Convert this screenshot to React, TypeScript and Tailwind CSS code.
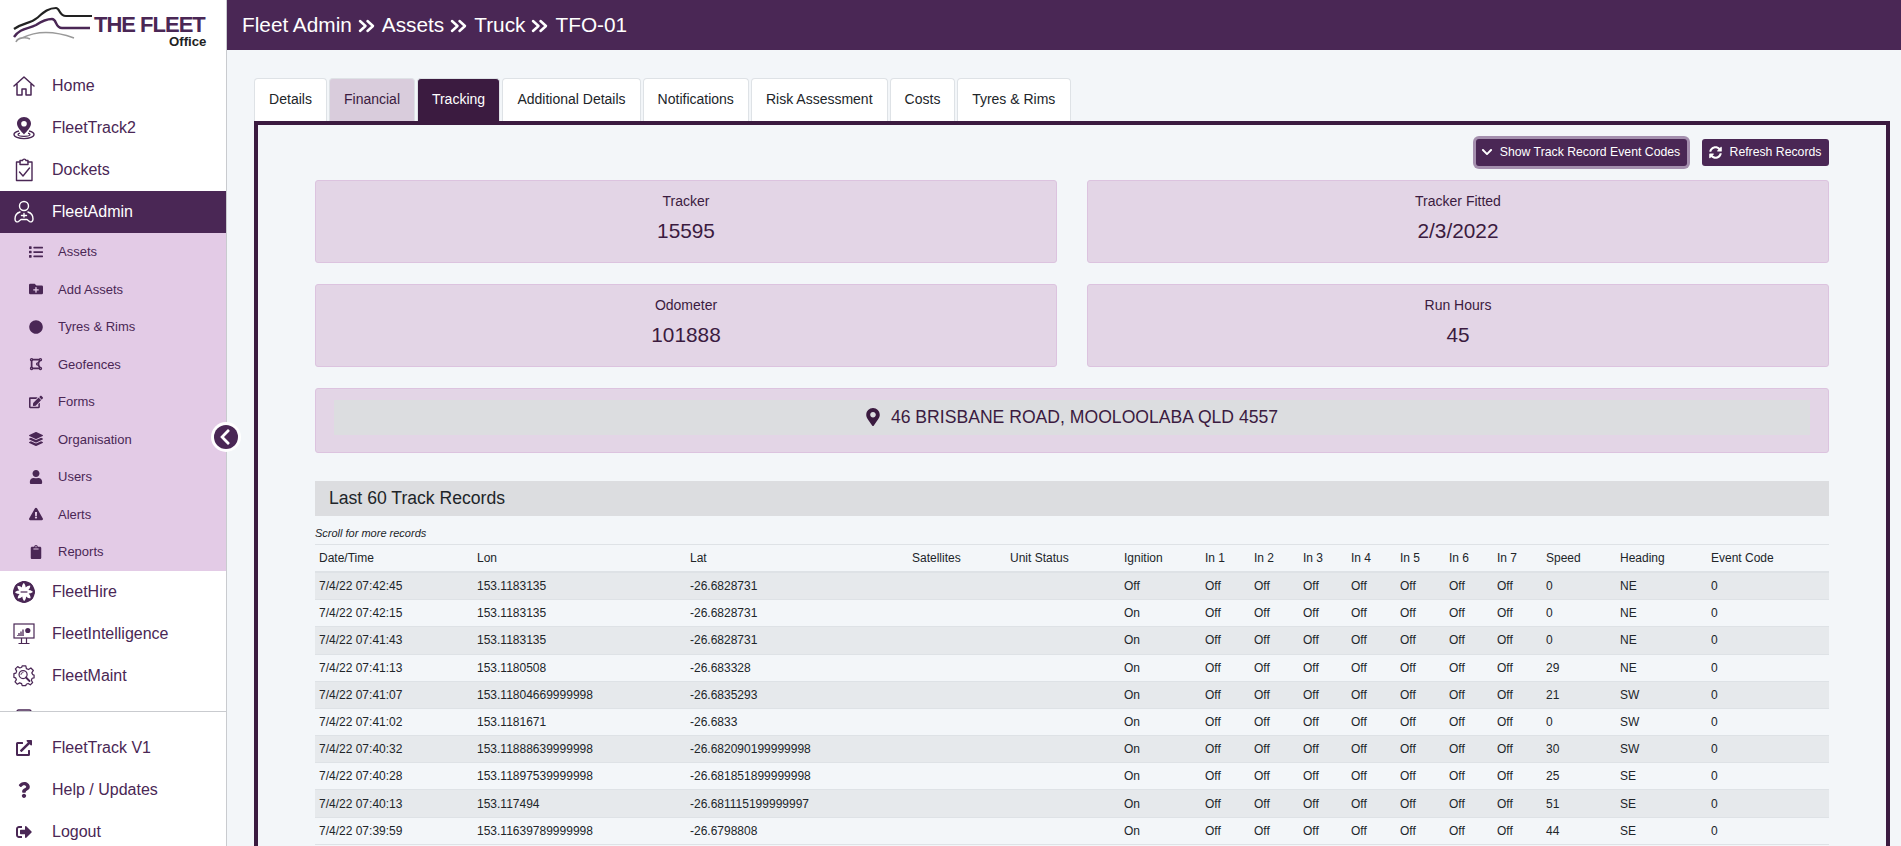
import React from 'react';
import {
  FaList, FaFolderPlus, FaCircle, FaDrawPolygon, FaEdit, FaLayerGroup, FaUser, FaExclamationTriangle,
  FaClipboard, FaExternalLinkAlt, FaQuestion, FaSignOutAlt, FaChevronLeft, FaChevronDown, FaSyncAlt,
  FaMapMarkerAlt,
} from 'react-icons/fa';

const P = '#4a2755';

function Logo() {
  return (
    <svg width="226" height="65" viewBox="0 0 226 65" className="block">
      <path d="M14 29 C24 22 30 24 37 18 C43 13 48 8 56 8 C60 8 59 16 66 16 L92 16" fill="none" stroke="#222" strokeWidth="2.2" />
      <path d="M14 37 C20 28 28 29 36 25 C42 21 46 19 52 19 C57 19 55 28 62 28 L90 28" fill="none" stroke={P} strokeWidth="2.4" />
      <path d="M16 42 C18 37 26 37 30 39 M22 38 C34 32 52 30 74 38" fill="none" stroke="#9a9a9a" strokeWidth="1.6" />
      <text x="94" y="32" fontSize="22" fontWeight="700" fill={P} letterSpacing="-1" fontFamily="'Liberation Sans',sans-serif">THE FLEET</text>
      <text x="169" y="46" fontSize="13.2" fontWeight="700" fill="#222" fontFamily="'Liberation Sans',sans-serif">Office</text>
    </svg>
  );
}

const HomeIcon = () => (
  <svg viewBox="0 0 22 22" width="22" height="22" fill="none" stroke={P} strokeWidth="1.5" strokeLinejoin="round" strokeLinecap="round">
    <path d="M1 11 L11 2 L21 11 M4 9 V20 H9 V14 H13 V20 H18 V9" />
  </svg>
);
const TrackIcon = () => (
  <svg viewBox="0 0 22 24" width="22" height="24" fill="none" stroke={P}>
    <path fillRule="evenodd" stroke="none" fill={P} d="M11 1 C6.8 1 4 4 4 7.6 C4 11.4 8.6 16 11 18.5 C13.4 16 18 11.4 18 7.6 C18 4 15.2 1 11 1 Z M11 5 A2.8 2.8 0 1 1 11 10.6 A2.8 2.8 0 1 1 11 5 Z" />
    <path strokeWidth="1.4" d="M6 15 C2.5 15.8 1 17 1 18.5 C1 20.8 5.5 22.6 11 22.6 C16.5 22.6 21 20.8 21 18.5 C21 17 19.5 15.8 16 15" />
    <path strokeWidth="1.2" d="M7 17.2 C5.5 17.6 5 18.1 5 18.6 C5 19.7 7.7 20.4 11 20.4 C14.3 20.4 17 19.7 17 18.6 C17 18.1 16.5 17.6 15 17.2" />
  </svg>
);
const DocketIcon = () => (
  <svg viewBox="0 0 22 24" width="22" height="24" fill="none" stroke={P} strokeWidth="1.4" strokeLinejoin="round" strokeLinecap="round">
    <path d="M7 4 H3.5 V22.5 H19 V4 H15" />
    <path d="M7 2.5 H9.5 A1.8 1.8 0 0 1 13 2.5 H15 V6.5 H7 Z" />
    <path d="M6.5 14 L10 18 L16.5 10" />
  </svg>
);
const AdminIcon = () => (
  <svg viewBox="0 0 22 24" width="22" height="24" fill="none" stroke="#fff" strokeWidth="1.4" strokeLinejoin="round" strokeLinecap="round">
    <circle cx="11" cy="6" r="4.5" />
    <path d="M7 12 C3.5 13 2 16 2 19 C2 21.5 4 22.5 5.5 21.5 L8 19.5 H14 L16.5 21.5 C18 22.5 20 21.5 20 19 C20 16 18.5 13 15 12" />
    <path d="M8.5 15.5 H13.5 M11 13.5 V17" />
  </svg>
);
const HireIcon = () => (
  <svg viewBox="-11 -11 22 22" width="22" height="22" fill={P}>
    {[0, 45, 90, 135, 180, 225, 270, 315].map((a) => (
      <path key={a} transform={`rotate(${a})`} d="M-2.5 -10.8 C2.5 -11.4 7.2 -9.4 9 -5.8 C6.5 -7.2 3.5 -6.6 1.6 -4.6 C1.8 -6.8 0.2 -9.4 -2.5 -10.8 Z" />
    ))}
    <circle r="4.4" fill="#fff" />
    <rect x="-3.4" y="-0.8" width="6.8" height="1.6" opacity="0.75" />
  </svg>
);
const IntelIcon = () => (
  <svg viewBox="0 0 22 22" width="22" height="22" fill="none" stroke={P} strokeWidth="1.2">
    <rect x="1" y="1" width="20" height="14" />
    <path d="M8.5 15 V20 M13.5 15 V20 M5.5 20.5 H16.5" />
    <path d="M6 12 V10 M8 12 V8.5 M10 12 V6.5" strokeWidth="1.3" />
    <circle cx="14.8" cy="7.5" r="2.6" fill={P} stroke="none" />
    <path d="M4 12.5 H11" strokeWidth="0.7" />
  </svg>
);
const MaintIcon = () => (
  <svg viewBox="0 0 24 24" width="23" height="23" fill="none" stroke={P} strokeWidth="1.35" strokeLinejoin="round" strokeLinecap="round">
    <path d="M10 1.5 H14 L14.6 4.5 L16.9 5.5 L19.5 3.8 L22.2 6.5 L20.5 9.1 L21.5 11 L23 11.5 V14.5 L20.9 15 L20 17.2 L21.4 19.7 L18.9 22.2 L16.5 20.7 L14.5 21.5 L14 23 H10 L9.4 20.9 L7.2 20 L4.8 21.5 L2.2 18.9 L3.7 16.5 L2.8 14.5 L1 14 V10 L3.2 9.4 L4 7.2 L2.6 4.8 L5.1 2.3 L7.5 3.8 L9.5 3 Z" />
    <circle cx="11" cy="11" r="4.4" />
    <path d="M14.2 14.2 L18 18" strokeWidth="2" />
    <path d="M8.6 11 A2.4 2.4 0 0 1 11 8.6" strokeWidth="0.9" />
  </svg>
);
const ClippedIcon = () => (
  <svg viewBox="0 0 16 18" width="16" height="18" fill="none" stroke={P} strokeWidth="1.4">
    <rect x="1" y="1" width="14" height="16" rx="1.5" />
  </svg>
);

function NavRow({ icon, label, active }: { icon: React.ReactNode; label?: string; active?: boolean }) {
  return (
    <div className={active ? 'flex items-center h-[42px] shrink-0 bg-[#4a2755] text-white' : 'flex items-center h-[42px] shrink-0 text-[#4a2755]'}>
      <span className="ml-[13px] w-[22px] flex justify-center">{icon}</span>
      {label && <span className="ml-[17px] text-[16px] whitespace-nowrap">{label}</span>}
    </div>
  );
}

function SubRow({ icon, label }: { icon: React.ReactNode; label: string }) {
  return (
    <div className="flex items-center h-[37.5px] text-[13px] text-[#4a2755]">
      <span className="ml-[28px] w-[16px] flex justify-center text-[14px]">{icon}</span>
      <span className="ml-[14px]">{label}</span>
    </div>
  );
}

function Sidebar() {
  return (
    <aside className="relative w-[227px] shrink-0 h-full bg-white border-r border-[#c9cbcf] flex flex-col">
      <div className="h-[65px] shrink-0"><Logo /></div>
      <div className="flex-1 min-h-0 overflow-hidden flex flex-col">
        <NavRow icon={<HomeIcon />} label="Home" />
        <NavRow icon={<TrackIcon />} label="FleetTrack2" />
        <NavRow icon={<DocketIcon />} label="Dockets" />
        <NavRow active icon={<AdminIcon />} label="FleetAdmin" />
        <div className="bg-[#e3cbe6] shrink-0">
          <SubRow icon={<FaList />} label="Assets" />
          <SubRow icon={<FaFolderPlus />} label="Add Assets" />
          <SubRow icon={<FaCircle />} label="Tyres & Rims" />
          <SubRow icon={<FaDrawPolygon />} label="Geofences" />
          <SubRow icon={<FaEdit />} label="Forms" />
          <SubRow icon={<FaLayerGroup />} label="Organisation" />
          <SubRow icon={<FaUser />} label="Users" />
          <SubRow icon={<FaExclamationTriangle />} label="Alerts" />
          <SubRow icon={<FaClipboard />} label="Reports" />
        </div>
        <NavRow icon={<HireIcon />} label="FleetHire" />
        <NavRow icon={<IntelIcon />} label="FleetIntelligence" />
        <NavRow icon={<MaintIcon />} label="FleetMaint" />
        <NavRow icon={<ClippedIcon />} />
      </div>
      <div className="shrink-0 border-t border-[#c9cbcf] pt-[15px] h-[135px]">
        <NavRow icon={<FaExternalLinkAlt className="text-[16px]" />} label="FleetTrack V1" />
        <NavRow icon={<FaQuestion className="text-[16px]" />} label="Help / Updates" />
        <NavRow icon={<FaSignOutAlt className="text-[16px]" />} label="Logout" />
      </div>
      <div className="absolute left-[211px] top-[422px] w-[30px] h-[30px] rounded-full bg-white flex items-center justify-center">
        <div className="w-[24px] h-[24px] rounded-full bg-[#4a2755] text-white flex items-center justify-center text-[18px]">
          <FaChevronLeft className="mr-[2px]" />
        </div>
      </div>
    </aside>
  );
}

const tabs = [
  { label: 'Details', cls: 'w-[73px] bg-white text-[#212529]' },
  { label: 'Financial', cls: 'w-[86px] bg-[#d9ccdc] text-[#3b1b40]' },
  { label: 'Tracking', cls: 'w-[83px] bg-[#3b1b40] text-white border-[#3b1b40]' },
  { label: 'Additional Details', cls: 'w-[139px] bg-white text-[#212529]' },
  { label: 'Notifications', cls: 'w-[105.5px] bg-white text-[#212529]' },
  { label: 'Risk Assessment', cls: 'w-[137.5px] bg-white text-[#212529]' },
  { label: 'Costs', cls: 'w-[65px] bg-white text-[#212529]' },
  { label: 'Tyres & Rims', cls: 'w-[113.5px] bg-white text-[#212529]' },
];

function Stat({ label, value }: { label: string; value: string }) {
  return (
    <div className="h-[83px] rounded-[3px] bg-[#e3d5e6] border border-[#dcc3df] flex flex-col items-center pt-[10px] text-[#3b1b40]">
      <div className="text-[14px] leading-[20px]">{label}</div>
      <div className="text-[20.8px] leading-[30px] mt-[5px]">{value}</div>
    </div>
  );
}

const colClasses = [
  'w-[158px]', 'w-[213px]', 'w-[222px]', 'w-[98px]', 'w-[114px]', 'w-[81px]',
  'w-[49px]', 'w-[49px]', 'w-[48px]', 'w-[49px]', 'w-[49px]', 'w-[48px]', 'w-[49px]',
  'w-[74px]', 'w-[91px]', 'w-[122px]',
];
const headers = ['Date/Time', 'Lon', 'Lat', 'Satellites', 'Unit Status', 'Ignition', 'In 1', 'In 2', 'In 3', 'In 4', 'In 5', 'In 6', 'In 7', 'Speed', 'Heading', 'Event Code'];
const rows: [string, string, string, string, string, string][] = [
  ['7/4/22 07:42:45', '153.1183135', '-26.6828731', 'Off', '0', 'NE'],
  ['7/4/22 07:42:15', '153.1183135', '-26.6828731', 'On', '0', 'NE'],
  ['7/4/22 07:41:43', '153.1183135', '-26.6828731', 'On', '0', 'NE'],
  ['7/4/22 07:41:13', '153.1180508', '-26.683328', 'On', '29', 'NE'],
  ['7/4/22 07:41:07', '153.11804669999998', '-26.6835293', 'On', '21', 'SW'],
  ['7/4/22 07:41:02', '153.1181671', '-26.6833', 'On', '0', 'SW'],
  ['7/4/22 07:40:32', '153.11888639999998', '-26.682090199999998', 'On', '30', 'SW'],
  ['7/4/22 07:40:28', '153.11897539999998', '-26.681851899999998', 'On', '25', 'SE'],
  ['7/4/22 07:40:13', '153.117494', '-26.681115199999997', 'On', '51', 'SE'],
  ['7/4/22 07:39:59', '153.11639789999998', '-26.6798808', 'On', '44', 'SE'],
];

function Tracks() {
  return (
    <table className="w-[1514px] table-fixed border-collapse text-[12px] text-[#212529]">
      <colgroup>
        {colClasses.map((c, i) => <col key={i} className={c} />)}
      </colgroup>
      <thead>
        <tr className="h-[28px] border-t border-[#dee2e6] border-b-2">
          {headers.map((h) => <th key={h} className="px-[4px] font-normal text-left whitespace-nowrap">{h}</th>)}
        </tr>
      </thead>
      <tbody>
        {rows.map((r, i) => (
          <tr key={r[0]} className={i % 2 === 0 ? 'h-[27.2px] bg-[#e6e9ec] border-b border-[#dee2e6]' : 'h-[27.2px] border-b border-[#dee2e6]'}>
            <td className="px-[4px] whitespace-nowrap">{r[0]}</td>
            <td className="px-[4px] whitespace-nowrap">{r[1]}</td>
            <td className="px-[4px] whitespace-nowrap">{r[2]}</td>
            <td className="px-[4px]"></td>
            <td className="px-[4px]"></td>
            <td className="px-[4px]">{r[3]}</td>
            {[1, 2, 3, 4, 5, 6, 7].map((n) => <td key={n} className="px-[4px]">Off</td>)}
            <td className="px-[4px]">{r[4]}</td>
            <td className="px-[4px]">{r[5]}</td>
            <td className="px-[4px]">0</td>
          </tr>
        ))}
      </tbody>
    </table>
  );
}

function Crumb() {
  return (
    <svg viewBox="0 0 18 14" width="18" height="14" className="mx-[6px] mt-[2px]" fill="none" stroke="#fff" strokeWidth="2.5" strokeLinecap="round" strokeLinejoin="round">
      <path d="M2 2 L7.5 7 L2 12 M9.5 2 L15 7 L9.5 12" />
    </svg>
  );
}

export default function App() {
  return (
    <div className="flex h-[846px] w-[1901px] overflow-hidden bg-[#f3f6f9] [font-family:'Liberation_Sans',Arial,sans-serif]">
      <Sidebar />
      <main className="flex-1 min-w-0 h-full flex flex-col">
        <header className="h-[50px] shrink-0 bg-[#4a2755] text-white flex items-center pl-[15px] text-[20.8px]">
          <span>Fleet Admin</span><Crumb /><span>Assets</span><Crumb /><span>Truck</span><Crumb /><span>TFO-01</span>
        </header>
        <div className="pt-[28px] pl-[27px] pr-[11px] flex-1 min-h-0 flex flex-col">
          <div className="flex gap-[2px] h-[43px] shrink-0">
            {tabs.map((t) => (
              <div key={t.label} className={`${t.cls} h-[43px] pb-[2px] flex items-center justify-center text-[14px] border border-b-0 border-[#dee2e6] rounded-t-[4px] whitespace-nowrap`}>
                {t.label}
              </div>
            ))}
          </div>
          <section className="flex-1 min-h-0 border-4 border-[#3b1b40] border-b-0 px-[57px]">
            <div className="flex justify-end items-center gap-[15px] h-[55px] pb-[1px]">
              <button className="h-[27px] w-[211px] pr-[2px] rounded-[3px] bg-[#4a2755] text-white text-[12.25px] flex items-center justify-center gap-[7px] shadow-[0_0_0_3px_#a48fae]">
                <FaChevronDown className="text-[12px]" />Show Track Record Event Codes
              </button>
              <button className="h-[27px] w-[127px] pr-[1px] rounded-[3px] bg-[#4a2755] text-white text-[12.25px] flex items-center justify-center gap-[8px]">
                <FaSyncAlt className="text-[13px]" />Refresh Records
              </button>
            </div>
            <div className="grid grid-cols-2 gap-x-[30px] gap-y-[21.4px]">
              <Stat label="Tracker" value="15595" />
              <Stat label="Tracker Fitted" value="2/3/2022" />
              <Stat label="Odometer" value="101888" />
              <Stat label="Run Hours" value="45" />
            </div>
            <div className="mt-[20.6px] h-[65px] rounded-[3px] bg-[#e3d5e6] border border-[#dcc3df] px-[18px] pt-[11px]">
              <div className="h-[35px] bg-[#dcdde0] flex items-center justify-center gap-[9px] pr-[2px] text-[17.6px] text-[#3b1b40]">
                <FaMapMarkerAlt className="text-[18px]" />46 BRISBANE ROAD, MOOLOOLABA QLD 4557
              </div>
            </div>
            <div className="mt-[28px] h-[35px] bg-[#dcdde0] flex items-center pl-[14px] text-[17.6px] text-[#212529]">Last 60 Track Records</div>
            <div className="h-[28px] flex items-end pb-[2px] text-[11px] italic text-[#212529]">Scroll for more records</div>
            <Tracks />
          </section>
        </div>
      </main>
    </div>
  );
}
